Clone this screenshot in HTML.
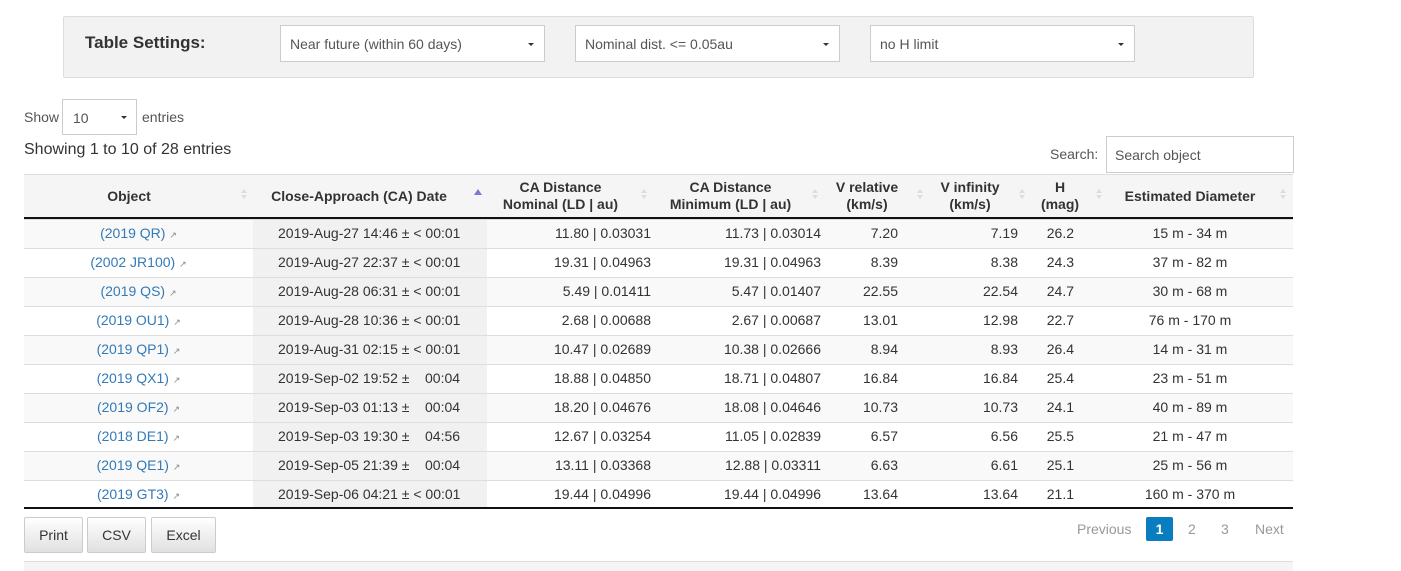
<!DOCTYPE html>
<html><head><meta charset="utf-8"><style>
*{box-sizing:border-box;margin:0;padding:0}
body{width:1401px;height:566px;overflow:hidden;background:#fff;font-family:"Liberation Sans",Arial,sans-serif;font-size:14px;color:#333;position:relative}
.a{position:absolute;white-space:nowrap}
.sel{position:absolute;top:25px;height:37px;width:265px;background:#fff;border:1px solid #ccc;font-size:14px;color:#555;padding:10px 9px}
.sel:after{content:"";position:absolute;right:10px;top:17px;border-left:3px solid transparent;border-right:3px solid transparent;border-top:3px solid #333}
.row{position:absolute;left:24px;width:1269px;height:29px;border-top:1px solid #ddd}
.row div{position:absolute;top:5px;white-space:nowrap}
.row div.sh{position:absolute;top:0;left:229px;width:234px;height:28px;background:#f1f1f1}
.odd .sh{background:#eaeaea}
.odd{background:#f9f9f9}
.lnk{color:#337ab7}
.ic{font-size:9px;color:#888}
.h{position:absolute;font-weight:bold;text-align:center;line-height:17px;font-size:14px}
.si{position:absolute;top:189px;width:0;height:0}
.si:before{content:"";position:absolute;left:-3px;top:0;border:3px solid transparent;border-bottom:4px solid #ddd;border-top:0}
.si:after{content:"";position:absolute;left:-3px;top:6px;border:3px solid transparent;border-top:4px solid #ddd;border-bottom:0}
.btn{position:absolute;top:517px;height:36px;background:linear-gradient(#fff,#e0e0e0);border:1px solid #ccc;border-radius:2px;font-size:14px;text-align:center;line-height:34px;color:#333}
</style></head><body>
<div class="a" style="left:63px;top:16px;width:1191px;height:62px;background:#f2f2f2;border:1px solid #ddd;border-radius:2px"></div>
<div class="a" style="left:85px;top:33px;font-size:17px;font-weight:bold">Table Settings:</div>
<div class="sel" style="left:280px">Near future (within 60 days)</div>
<div class="sel" style="left:575px">Nominal dist. &lt;= 0.05au</div>
<div class="sel" style="left:870px">no H limit</div>

<div class="a" style="left:24px;top:109px;color:#555">Show</div>
<div class="a" style="left:62px;top:99px;width:75px;height:36px;border:1px solid #ccc;padding:10px 10px;color:#555">10</div>
<div class="a" style="left:121px;top:116px;border-left:3px solid transparent;border-right:3px solid transparent;border-top:3px solid #333"></div>
<div class="a" style="left:142px;top:109px;color:#555">entries</div>
<div class="a" style="left:24px;top:141px;font-size:16px">Showing 1 to 10 of 28 entries</div>
<div class="a" style="left:1050px;top:146px;color:#555">Search:</div>
<div class="a" style="left:1106px;top:136px;width:188px;height:37px;border:1px solid #ccc;padding:10px 8px;color:#555">Search object</div>

<div class="a" style="left:24px;top:174px;width:1269px;height:45px;background:#f5f5f5;border-top:1px solid #ddd;border-bottom:2px solid #111"></div>
<div class="h" style="left:24px;width:210px;top:188px">Object</div>
<div class="h" style="left:253px;width:212px;top:188px">Close-Approach (CA) Date</div>
<div class="h" style="left:487px;width:147px;top:179px">CA Distance<br>Nominal (LD | au)</div>
<div class="h" style="left:657px;width:147px;top:179px">CA Distance<br>Minimum (LD | au)</div>
<div class="h" style="left:827px;width:80px;top:179px">V relative<br>(km/s)</div>
<div class="h" style="left:930px;width:80px;top:179px">V infinity<br>(km/s)</div>
<div class="h" style="left:1030px;width:60px;top:179px">H<br>(mag)</div>
<div class="h" style="left:1110px;width:160px;top:188px">Estimated Diameter</div>
<div class="si" style="left:244px"></div>
<div class="a" style="left:474px;top:189px;border-left:4px solid transparent;border-right:4px solid transparent;border-bottom:6px solid #7a7ad0"></div>
<div class="si" style="left:644px"></div>
<div class="si" style="left:815px"></div>
<div class="si" style="left:920px"></div>
<div class="si" style="left:1022px"></div>
<div class="si" style="left:1099px"></div>
<div class="si" style="left:1283px"></div>

<div class="row odd" style="top:219px"><div class="sh"></div><div style="left:0;width:229px;text-align:center"><span class="lnk">(2019 QR)</span> <span class="ic">↗</span></div><div style="left:254px">2019-Aug-27 14:46 ± &lt; 00:01</div><div style="right:642px">11.80 | 0.03031</div><div style="right:472px">11.73 | 0.03014</div><div style="right:395px">7.20</div><div style="right:275px">7.19</div><div style="right:219px">26.2</div><div style="left:1086px;width:160px;text-align:center">15 m - 34 m</div></div>
<div class="row" style="top:248px"><div class="sh"></div><div style="left:0;width:229px;text-align:center"><span class="lnk">(2002 JR100)</span> <span class="ic">↗</span></div><div style="left:254px">2019-Aug-27 22:37 ± &lt; 00:01</div><div style="right:642px">19.31 | 0.04963</div><div style="right:472px">19.31 | 0.04963</div><div style="right:395px">8.39</div><div style="right:275px">8.38</div><div style="right:219px">24.3</div><div style="left:1086px;width:160px;text-align:center">37 m - 82 m</div></div>
<div class="row odd" style="top:277px"><div class="sh"></div><div style="left:0;width:229px;text-align:center"><span class="lnk">(2019 QS)</span> <span class="ic">↗</span></div><div style="left:254px">2019-Aug-28 06:31 ± &lt; 00:01</div><div style="right:642px">5.49 | 0.01411</div><div style="right:472px">5.47 | 0.01407</div><div style="right:395px">22.55</div><div style="right:275px">22.54</div><div style="right:219px">24.7</div><div style="left:1086px;width:160px;text-align:center">30 m - 68 m</div></div>
<div class="row" style="top:306px"><div class="sh"></div><div style="left:0;width:229px;text-align:center"><span class="lnk">(2019 OU1)</span> <span class="ic">↗</span></div><div style="left:254px">2019-Aug-28 10:36 ± &lt; 00:01</div><div style="right:642px">2.68 | 0.00688</div><div style="right:472px">2.67 | 0.00687</div><div style="right:395px">13.01</div><div style="right:275px">12.98</div><div style="right:219px">22.7</div><div style="left:1086px;width:160px;text-align:center">76 m - 170 m</div></div>
<div class="row odd" style="top:335px"><div class="sh"></div><div style="left:0;width:229px;text-align:center"><span class="lnk">(2019 QP1)</span> <span class="ic">↗</span></div><div style="left:254px">2019-Aug-31 02:15 ± &lt; 00:01</div><div style="right:642px">10.47 | 0.02689</div><div style="right:472px">10.38 | 0.02666</div><div style="right:395px">8.94</div><div style="right:275px">8.93</div><div style="right:219px">26.4</div><div style="left:1086px;width:160px;text-align:center">14 m - 31 m</div></div>
<div class="row" style="top:364px"><div class="sh"></div><div style="left:0;width:229px;text-align:center"><span class="lnk">(2019 QX1)</span> <span class="ic">↗</span></div><div style="left:254px">2019-Sep-02 19:52 ± &nbsp;&nbsp;&nbsp;00:04</div><div style="right:642px">18.88 | 0.04850</div><div style="right:472px">18.71 | 0.04807</div><div style="right:395px">16.84</div><div style="right:275px">16.84</div><div style="right:219px">25.4</div><div style="left:1086px;width:160px;text-align:center">23 m - 51 m</div></div>
<div class="row odd" style="top:393px"><div class="sh"></div><div style="left:0;width:229px;text-align:center"><span class="lnk">(2019 OF2)</span> <span class="ic">↗</span></div><div style="left:254px">2019-Sep-03 01:13 ± &nbsp;&nbsp;&nbsp;00:04</div><div style="right:642px">18.20 | 0.04676</div><div style="right:472px">18.08 | 0.04646</div><div style="right:395px">10.73</div><div style="right:275px">10.73</div><div style="right:219px">24.1</div><div style="left:1086px;width:160px;text-align:center">40 m - 89 m</div></div>
<div class="row" style="top:422px"><div class="sh"></div><div style="left:0;width:229px;text-align:center"><span class="lnk">(2018 DE1)</span> <span class="ic">↗</span></div><div style="left:254px">2019-Sep-03 19:30 ± &nbsp;&nbsp;&nbsp;04:56</div><div style="right:642px">12.67 | 0.03254</div><div style="right:472px">11.05 | 0.02839</div><div style="right:395px">6.57</div><div style="right:275px">6.56</div><div style="right:219px">25.5</div><div style="left:1086px;width:160px;text-align:center">21 m - 47 m</div></div>
<div class="row odd" style="top:451px"><div class="sh"></div><div style="left:0;width:229px;text-align:center"><span class="lnk">(2019 QE1)</span> <span class="ic">↗</span></div><div style="left:254px">2019-Sep-05 21:39 ± &nbsp;&nbsp;&nbsp;00:04</div><div style="right:642px">13.11 | 0.03368</div><div style="right:472px">12.88 | 0.03311</div><div style="right:395px">6.63</div><div style="right:275px">6.61</div><div style="right:219px">25.1</div><div style="left:1086px;width:160px;text-align:center">25 m - 56 m</div></div>
<div class="row" style="top:480px;height:29px;border-bottom:2px solid #111"><div class="sh" style="height:26px"></div><div style="left:0;width:229px;text-align:center"><span class="lnk">(2019 GT3)</span> <span class="ic">↗</span></div><div style="left:254px">2019-Sep-06 04:21 ± &lt; 00:01</div><div style="right:642px">19.44 | 0.04996</div><div style="right:472px">19.44 | 0.04996</div><div style="right:395px">13.64</div><div style="right:275px">13.64</div><div style="right:219px">21.1</div><div style="left:1086px;width:160px;text-align:center">160 m - 370 m</div></div>

<div class="btn" style="left:24px;width:59px">Print</div>
<div class="btn" style="left:87px;width:59px">CSV</div>
<div class="btn" style="left:151px;width:65px">Excel</div>
<div class="a" style="left:1077px;top:521px;color:#999">Previous</div>
<div class="a" style="left:1146px;top:517px;width:27px;height:24px;background:#0a7cc0;color:#fff;text-align:center;line-height:24px;font-weight:bold;border-radius:2px">1</div>
<div class="a" style="left:1188px;top:521px;color:#999">2</div>
<div class="a" style="left:1221px;top:521px;color:#999">3</div>
<div class="a" style="left:1255px;top:521px;color:#999">Next</div>
<div class="a" style="left:24px;top:561px;width:1269px;height:10px;background:#f5f5f5;border-top:1px solid #ddd"></div>
</body></html>
